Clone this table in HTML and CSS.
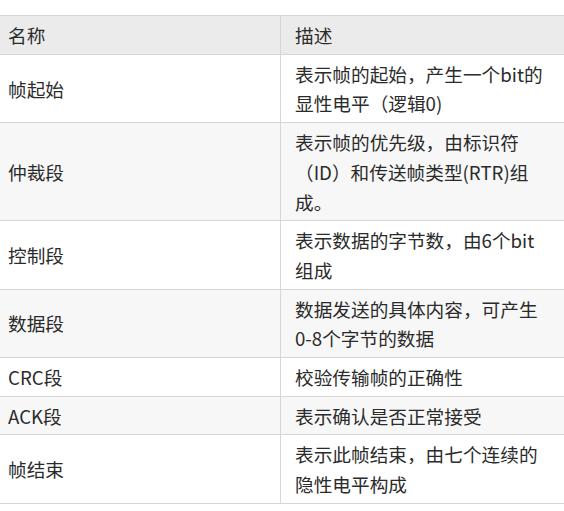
FILE: index.html
```html
<!DOCTYPE html>
<html lang="zh-CN">
<head>
<meta charset="utf-8">
<link rel="stylesheet" href="styles.css">
</head>
<body>
<table class="frame-table">
  <thead>
    <tr><th class="name">名称</th><th class="desc">描述</th></tr>
  </thead>
  <tbody>
    <tr><td class="name">帧起始</td><td class="desc">表示帧的起始，产生一个bit的显性电平（逻辑0)</td></tr>
    <tr><td class="name">仲裁段</td><td class="desc">表示帧的优先级，由标识符（ID）和传送帧类型(RTR)组成。</td></tr>
    <tr><td class="name">控制段</td><td class="desc">表示数据的字节数，由6个bit组成</td></tr>
    <tr><td class="name">数据段</td><td class="desc">数据发送的具体内容，可产生0-8个字节的数据</td></tr>
    <tr><td class="name">CRC段</td><td class="desc">校验传输帧的正确性</td></tr>
    <tr><td class="name">ACK段</td><td class="desc">表示确认是否正常接受</td></tr>
    <tr><td class="name">帧结束</td><td class="desc">表示此帧结束，由七个连续的隐性电平构成</td></tr>
  </tbody>
</table>
</body>
</html>
```
FILE: styles.css
```css
html, body {
  margin: 0;
  padding: 0;
  background: #ffffff;
  overflow: hidden;
}
body {
  font-family: "Noto Sans CJK SC", "Noto Sans", sans-serif;
  font-size: 18.67px;
  color: #2b2b2b;
}
.frame-table {
  margin-top: 15px;
  border-collapse: separate;
  border-spacing: 0;
  table-layout: fixed;
  width: 580px;
  border-top: 1px solid #d6d6d6;
}
.frame-table th,
.frame-table td {
  box-sizing: border-box;
  padding: 4px 14px;
  line-height: 29.7px;
  text-align: left;
  font-weight: normal;
  vertical-align: middle;
  border-bottom: 1px solid #d6d6d6;
}
.frame-table .name {
  width: 281px;
  padding-left: 8px;
  border-right: 1px solid #d6d6d6;
}
.frame-table .desc {
  width: 299px;
  padding-right: 31px;
}
.frame-table thead th {
  background: #ebebeb;
}
.frame-table tbody tr:nth-child(even) td {
  background: #f7f7f7;
}
```
